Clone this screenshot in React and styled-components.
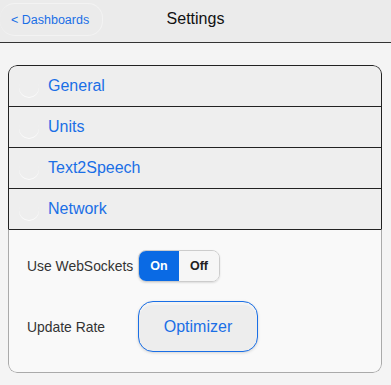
import React from "react";
import styled, { createGlobalStyle } from "styled-components";

const Global = createGlobalStyle`
  html, body { margin: 0; padding: 0; }
  body {
    background: #f4f4f4;
    font-family: "Liberation Sans", Arial, sans-serif;
    color: #333;
  }
`;

const Page = styled.div`
  min-height: 385px;
  background: #f4f4f4;
`;

const Header = styled.header`
  height: 42px;
  background: #ebebeb;
  border-bottom: 1px solid #333;
  display: grid;
  grid-template-columns: 1fr auto 1fr;
  align-items: center;
`;

const BackButton = styled.a`
  justify-self: start;
  height: 31px;
  padding: 0 13px 0 11px;
  display: flex;
  align-items: center;
  font-size: 12.5px;
  color: #1a6fe6;
  text-decoration: none;
  border-radius: 15px;
  border: 1px solid rgba(255, 255, 255, 0.4);
  border-left: none;
  margin-top: -3px;
`;

const Title = styled.h1`
  margin: 0;
  margin-top: -4px;
  font-size: 16px;
  font-weight: normal;
  color: #111;
`;

const Content = styled.main`
  padding: 22px 9px 0 8px;
`;

const Panel = styled.section`
  border-radius: 9px;
  overflow: hidden;
`;

const Row = styled.div`
  height: 40px;
  display: flex;
  align-items: center;
  background: #eeeeee;
  border: 1px solid #222;
  border-bottom: none;
  padding-left: 10px;
  gap: 9px;
  font-size: 16px;
  color: #1a6fe6;
  &:first-child {
    border-top-left-radius: 9px;
    border-top-right-radius: 9px;
  }
`;

const Dot = styled.span`
  width: 20px;
  height: 20px;
  border-radius: 50%;
  box-shadow: 0 1px 0 rgba(255, 255, 255, 0.7);
  flex: none;
  margin-top: 1px;
`;

const Body = styled.div`
  border-top: 1px solid #222;
  border-left: 1px solid #aaa;
  border-right: 1px solid #aaa;
  border-bottom: 1px solid #aaa;
  border-bottom-left-radius: 9px;
  border-bottom-right-radius: 9px;
  background: #f9f9f9;
  padding: 20px 18px 20px 18px;
  display: grid;
  grid-template-columns: 111px auto;
  row-gap: 19px;
  align-items: center;
  justify-content: start;
`;

const Label = styled.span`
  font-size: 13.9px;
  color: #333;
`;

const Flip = styled.div`
  display: flex;
  width: 82px;
  height: 32px;
  box-sizing: border-box;
  border: 1px solid #ccc;
  border-radius: 8px;
  overflow: hidden;
  box-shadow: 0 1px 2px rgba(0, 0, 0, 0.12);
`;

const FlipPart = styled.span`
  flex: 1;
  display: flex;
  align-items: center;
  justify-content: center;
  font-size: 12.5px;
  font-weight: bold;
  background: ${(p) => (p.$on ? "#0a6ae4" : "#f6f6f6")};
  color: ${(p) => (p.$on ? "#fff" : "#222")};
`;

const Button = styled.button`
  width: 120px;
  height: 51px;
  box-sizing: border-box;
  border: 1px solid #1a6fe6;
  border-radius: 15px;
  background: #ededed;
  color: #1a6fe6;
  font-family: "Liberation Sans", Arial, sans-serif;
  font-size: 16px;
  box-shadow: 0 1px 3px rgba(0, 0, 0, 0.15), inset 0 3px 0 rgba(255, 255, 255, 0.35);
  padding: 0;
`;

const sections = ["General", "Units", "Text2Speech", "Network"];

export default function App() {
  return (
    <Page>
      <Global />
      <Header>
        <BackButton href="#">&lt; Dashboards</BackButton>
        <Title>Settings</Title>
        <span />
      </Header>
      <Content>
        <Panel>
          {sections.map((s) => (
            <Row key={s}>
              <Dot />
              {s}
            </Row>
          ))}
          <Body>
            <Label>Use WebSockets</Label>
            <Flip>
              <FlipPart $on>On</FlipPart>
              <FlipPart>Off</FlipPart>
            </Flip>
            <Label>Update Rate</Label>
            <Button>Optimizer</Button>
          </Body>
        </Panel>
      </Content>
    </Page>
  );
}
